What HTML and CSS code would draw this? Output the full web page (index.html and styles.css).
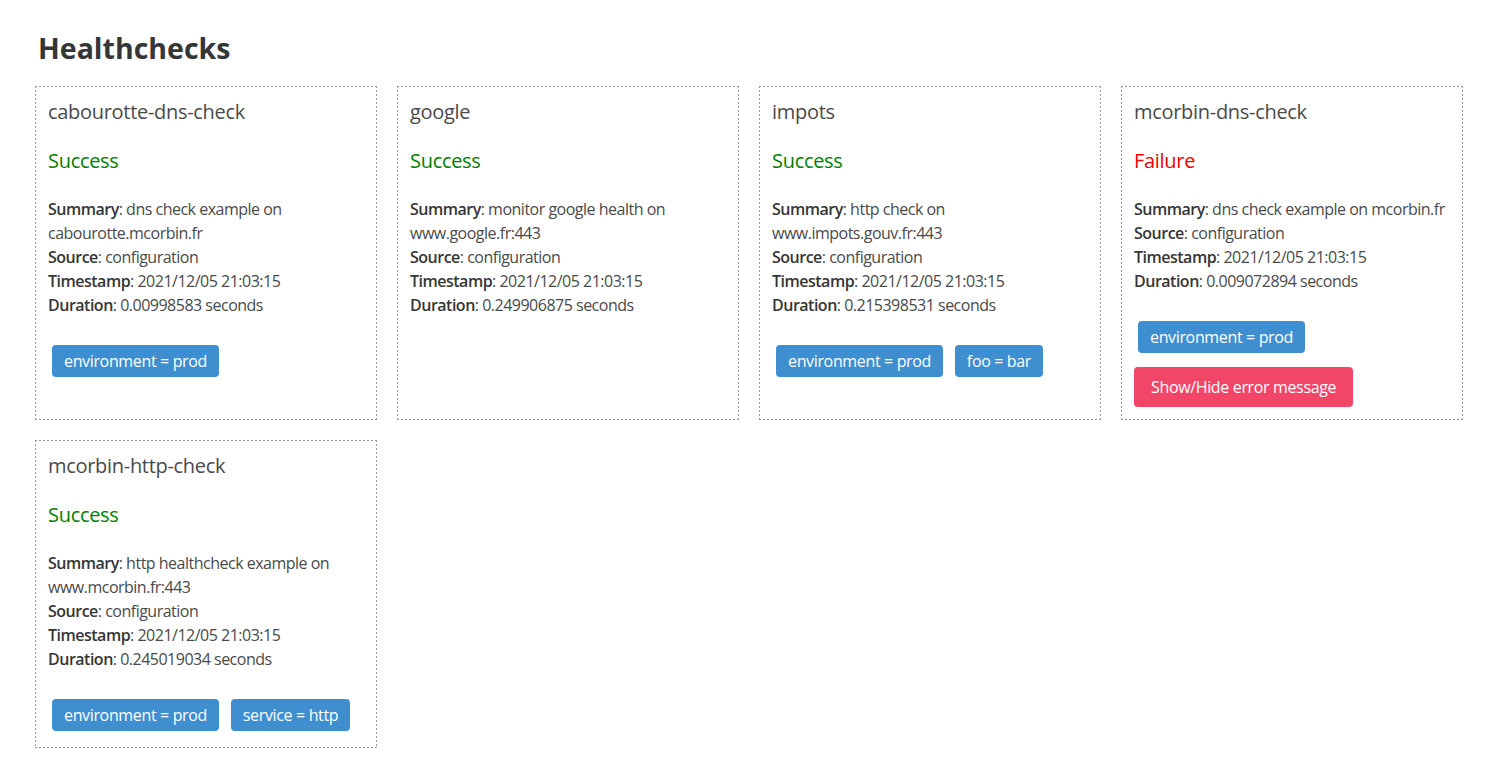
FILE: index.html
```html
<!DOCTYPE html>
<html lang="en">
<head>
<meta charset="utf-8">
<title>Healthchecks</title>
<link rel="stylesheet" href="styles.css">
</head>
<body>
<main class="page">
  <h1 class="page-title">Healthchecks</h1>
  <div class="grid">
    <section class="card">
      <h2 class="card-title">cabourotte-dns-check</h2>
      <p class="status success">Success</p>
      <div class="details">
        <div><b>Summary</b>: dns check example on cabourotte.mcorbin.fr</div>
        <div><b>Source</b>: configuration</div>
        <div><b>Timestamp</b>: 2021/12/05 21:03:15</div>
        <div><b>Duration</b>: 0.00998583 seconds</div>
      </div>
      <div class="tags"><span class="tag">environment = prod</span></div>
    </section>
    <section class="card">
      <h2 class="card-title">google</h2>
      <p class="status success">Success</p>
      <div class="details">
        <div><b>Summary</b>: monitor google health on www.google.fr:443</div>
        <div><b>Source</b>: configuration</div>
        <div><b>Timestamp</b>: 2021/12/05 21:03:15</div>
        <div><b>Duration</b>: 0.249906875 seconds</div>
      </div>
    </section>
    <section class="card">
      <h2 class="card-title">impots</h2>
      <p class="status success">Success</p>
      <div class="details">
        <div><b>Summary</b>: http check on www.impots.gouv.fr:443</div>
        <div><b>Source</b>: configuration</div>
        <div><b>Timestamp</b>: 2021/12/05 21:03:15</div>
        <div><b>Duration</b>: 0.215398531 seconds</div>
      </div>
      <div class="tags"><span class="tag">environment = prod</span> <span class="tag">foo = bar</span></div>
    </section>
    <section class="card">
      <h2 class="card-title">mcorbin-dns-check</h2>
      <p class="status failure">Failure</p>
      <div class="details">
        <div><b>Summary</b>: dns check example on mcorbin.fr</div>
        <div><b>Source</b>: configuration</div>
        <div><b>Timestamp</b>: 2021/12/05 21:03:15</div>
        <div><b>Duration</b>: 0.009072894 seconds</div>
      </div>
      <div class="tags"><span class="tag">environment = prod</span></div>
      <button class="btn-danger" type="button">Show/Hide error message</button>
    </section>
    <section class="card">
      <h2 class="card-title">mcorbin-http-check</h2>
      <p class="status success">Success</p>
      <div class="details">
        <div><b>Summary</b>: http healthcheck example on www.mcorbin.fr:443</div>
        <div><b>Source</b>: configuration</div>
        <div><b>Timestamp</b>: 2021/12/05 21:03:15</div>
        <div><b>Duration</b>: 0.245019034 seconds</div>
      </div>
      <div class="tags"><span class="tag">environment = prod</span> <span class="tag">service = http</span></div>
    </section>
  </div>
</main>
</body>
</html>
```

FILE: styles.css
```css
* { box-sizing: border-box; }
html, body { margin: 0; padding: 0; background: #fff; }
body {
  font-family: "Open Sans", "Noto Sans", sans-serif;
  font-size: 16px;
  color: #4a4a4a;
  letter-spacing: -0.35px;
}
.page {
  padding: 28px 0 0 35px;
}
.page-title {
  margin: 0 0 18px 3px;
  font-size: 28.5px;
  line-height: 40px;
  font-weight: 700;
  letter-spacing: 0;
  color: #363636;
}
.grid {
  display: grid;
  grid-template-columns: repeat(4, 342px);
  column-gap: 20px;
  row-gap: 20px;
  align-items: stretch;
}
.card {
  padding: 13px;
  background-image:
    repeating-linear-gradient(90deg, #999 0 2px, transparent 2px 4px),
    repeating-linear-gradient(90deg, #999 0 2px, transparent 2px 4px),
    repeating-linear-gradient(180deg, #999 0 2px, transparent 2px 4px),
    repeating-linear-gradient(180deg, #999 0 2px, transparent 2px 4px);
  background-size: 100% 1px, 100% 1px, 1px 100%, 1px 100%;
  background-position: 0 0, 0 100%, 0 0, 100% 0;
  background-repeat: no-repeat;
}
.card-title {
  margin: 0;
  font-size: 20px;
  line-height: 25px;
  font-weight: 400;
  letter-spacing: -0.3px;
  color: #4a4a4a;
}
.status {
  margin: 24px 0 0;
  font-size: 20px;
  line-height: 25px;
  letter-spacing: -0.3px;
}
.success { color: #008000; }
.failure { color: #f00000; }
.details {
  margin-top: 24px;
  font-size: 16px;
  line-height: 24px;
  letter-spacing: -0.5px;
}
.details b { font-weight: 600; color: #363636; }
.tags {
  margin-top: 24px;
  font-size: 16px;
}
.tag {
  display: inline-flex;
  align-items: center;
  height: 32px;
  margin: 4px;
  padding: 0 12px;
  background: #3e8ed0;
  color: #fff;
  border-radius: 4px;
  line-height: 1.5;
}
.btn-danger {
  display: block;
  margin-top: 10px;
  height: 40px;
  padding: 0 17px;
  border: 0;
  border-radius: 4px;
  background: #f14668;
  color: #fff;
  font-family: inherit;
  font-size: 16px;
  letter-spacing: -0.35px;
  cursor: pointer;
}
```
